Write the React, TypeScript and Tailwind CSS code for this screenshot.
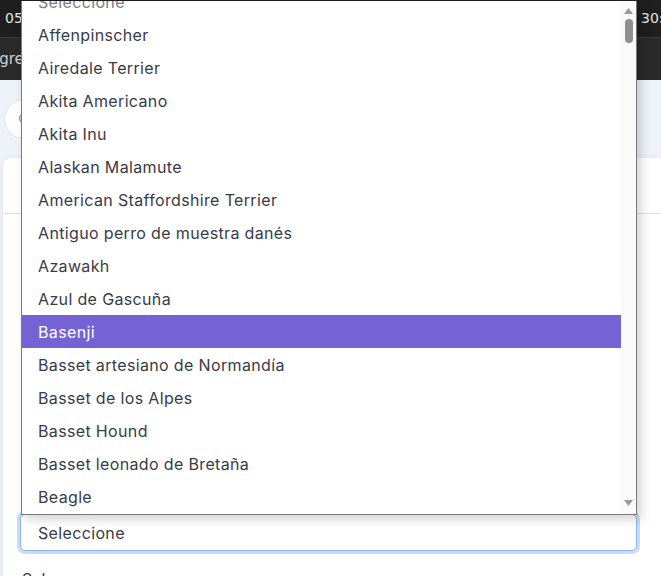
import React from "react";

const breeds = [
  "Seleccione",
  "Affenpinscher",
  "Airedale Terrier",
  "Akita Americano",
  "Akita Inu",
  "Alaskan Malamute",
  "American Staffordshire Terrier",
  "Antiguo perro de muestra danés",
  "Azawakh",
  "Azul de Gascuña",
  "Basenji",
  "Basset artesiano de Normandía",
  "Basset de los Alpes",
  "Basset Hound",
  "Basset leonado de Bretaña",
  "Beagle",
  "Beagle-Harrier",
];

const selected = "Basenji";

export default function App() {
  return (
    <div className="relative w-[661px] h-[576px] overflow-hidden bg-[#eef2f9] font-['Inter',sans-serif]">
      {/* top bar */}
      <div className="h-[38px] bg-[#1f1f1f] border-b border-[#3a3a3a] flex items-center px-[5px] text-[14px] text-[#e6e6e6] font-['DejaVu_Sans',sans-serif]">
        <span>05:</span>
        <span className="ml-auto mr-[-25px] w-[40px] whitespace-nowrap">30:00</span>
      </div>
      <div className="h-[42px] bg-[#2a2a2a] flex items-center text-[15px] text-[#cfcfcf] font-['DejaVu_Sans',sans-serif]">
        <span className="-ml-[10px]">agregar</span>
      </div>

      {/* search row */}
      <div className="h-[78px] px-[4px] pt-[19px]">
        <div className="h-[40px] w-[200px] rounded-full bg-white border border-[#dfe5ef] flex items-center pl-[12px] text-[#9aa3b0]">
          <svg width="16" height="16" viewBox="0 0 24 24" fill="none" stroke="currentColor" strokeWidth="2.4">
            <circle cx="11" cy="11" r="7" />
            <path d="M20 20l-4-4" />
          </svg>
        </div>
      </div>

      {/* card */}
      <div className="ml-[3px] rounded-tl-[8px] bg-white h-[420px] shadow-[0_0_6px_rgba(0,0,0,0.06)]">
        <div className="h-[56px] border-b border-[#d6e2f2]" />
        <div className="h-[300px]" />
        <div className="px-[17px]">
          <div className="w-[617px] h-[37px] rounded-[5px] border border-[#8bb5ee] ring-[3px] ring-[#c8dbf7] flex items-center pl-[17px] text-[16px] tracking-[0.35px] text-[#383b47] font-['Inter',sans-serif]">
            Seleccione
          </div>
          <div className="mt-[16px] ml-[2px] text-[16px] text-[#383b47]">Sele</div>
        </div>
      </div>

      {/* open native-like dropdown list */}
      <div className="absolute left-[21px] top-[1px] w-[616px] h-[514px] bg-white border-x border-b border-[#7a7a7a] overflow-hidden shadow-[4px_4px_10px_rgba(0,0,0,0.18)] flex">
        <div className="flex-1 overflow-hidden">
          <div className="-mt-[16px]">
            {breeds.map((b, i) => (
              <div
                key={b}
                className={`h-[33px] flex items-center pl-[16px] text-[16px] tracking-[0.35px] ${
                  b === selected
                    ? "bg-[#7563d6] text-white"
                    : i === 0
                    ? "text-[#7d7d86]"
                    : "text-[#383b47]"
                }`}
              >
                {b}
              </div>
            ))}
          </div>
        </div>
        {/* scrollbar */}
        <div className="w-[15px] bg-[#fafafa] flex flex-col items-center">
          <svg width="9" height="6" viewBox="0 0 9 6" className="mt-[7px]">
            <path d="M0 6L4.5 0L9 6Z" fill="#9a9a9a" />
          </svg>
          <div className="mt-[5px] w-[8px] h-[24px] rounded-full bg-[#8f8f8f]" />
          <div className="flex-1" />
          <svg width="9" height="6" viewBox="0 0 9 6" className="mb-[8px]">
            <path d="M0 0L9 0L4.5 6Z" fill="#9a9a9a" />
          </svg>
        </div>
      </div>
    </div>
  );
}
